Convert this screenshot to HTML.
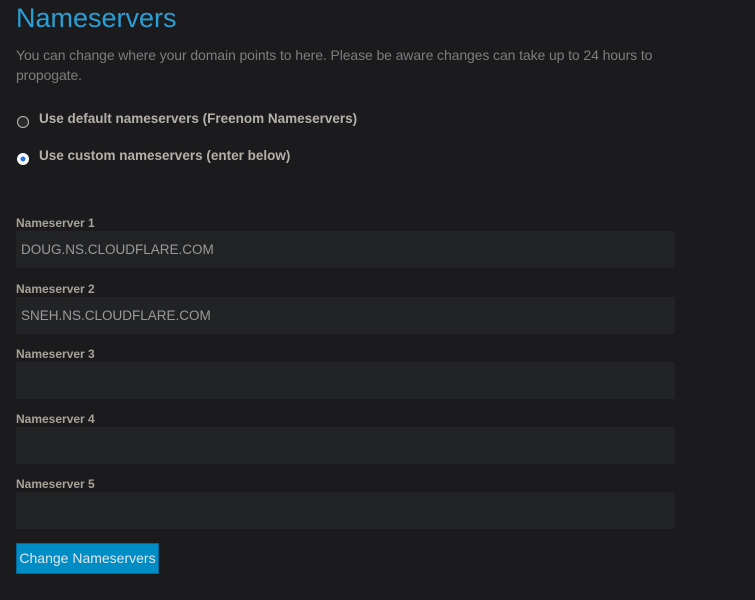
<!DOCTYPE html>
<html><head><meta charset="utf-8"><style>
body{margin:0;background:#1b1b1d;font-family:"Liberation Sans",sans-serif;width:755px;height:600px;overflow:hidden;position:relative}
.a{position:absolute}
h1{position:absolute;left:16px;top:2px;margin:0;font-weight:normal;font-size:27px;color:#2a9fd6;line-height:32px}
.d{left:16px;top:45px;width:680px;font-size:14px;line-height:20px;color:#7d7d7d;letter-spacing:-0.1px}
.r{left:16px;font-size:13.5px;font-weight:bold;color:#b5b0a8}
.rad{position:absolute;left:1px;width:10px;height:10px;border-radius:50%;border:1.5px solid #bbb;background:#2a2a2c}
.rad.on{border-color:#fff;background:#2a6fe8;box-shadow:inset 0 0 0 2.5px #fff}
.l{left:16px;font-size:12px;font-weight:bold;color:#a8a298}
.i{left:16px;width:659px;height:37px;background:#222325;color:#9a9a9a;font-size:13.5px;line-height:37px;box-sizing:border-box;padding-left:5px}
.b{left:16px;top:543px;width:143px;height:31px;background:#008cc4;border:1px solid #02689a;box-sizing:border-box;color:#dfe8ee;font-size:14px;line-height:29px;text-align:center}
</style></head><body>
<h1>Nameservers</h1>
<div class="a d">You can change where your domain points to here. Please be aware changes can take up to 24 hours to<br>propogate.</div>
<div class="a r" style="top:111px"><span class="rad" style="top:5px"></span><span style="margin-left:23px">Use default nameservers (Freenom Nameservers)</span></div>
<div class="a r" style="top:148px"><span class="rad on" style="top:5px"></span><span style="margin-left:23px">Use custom nameservers (enter below)</span></div>
<div class="a l" style="top:216px">Nameserver 1</div>
<div class="a i" style="top:231px">DOUG.NS.CLOUDFLARE.COM</div>
<div class="a l" style="top:282px">Nameserver 2</div>
<div class="a i" style="top:297px">SNEH.NS.CLOUDFLARE.COM</div>
<div class="a l" style="top:347px">Nameserver 3</div>
<div class="a i" style="top:362px"></div>
<div class="a l" style="top:412px">Nameserver 4</div>
<div class="a i" style="top:427px"></div>
<div class="a l" style="top:477px">Nameserver 5</div>
<div class="a i" style="top:492px"></div>
<div class="a b">Change Nameservers</div>
</body></html>
